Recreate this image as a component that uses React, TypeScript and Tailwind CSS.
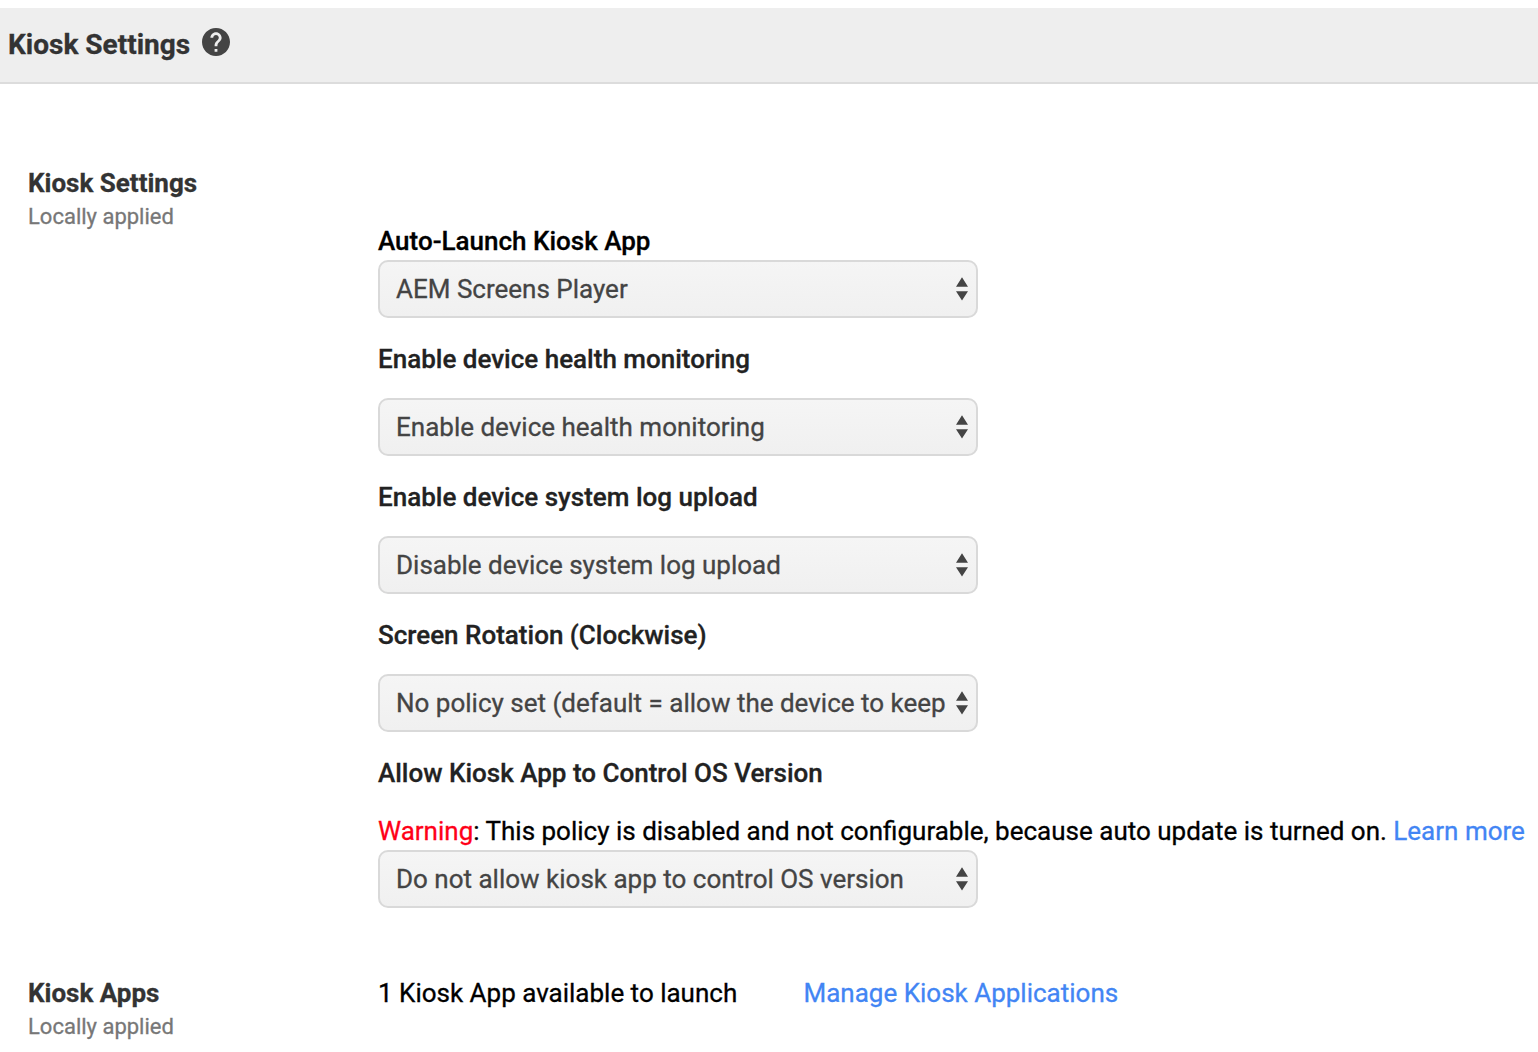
import React from "react";

function Arrows() {
  return (
    <svg width="12" height="24" viewBox="0 0 12 24" fill="#444" className="shrink-0">
      <path d="M6 0.3 12 9.7H0ZM0 14.2H12L6 23.6Z" />
    </svg>
  );
}

function Select({ text }: { text: string }) {
  return (
    <button className="flex h-[58px] w-[600px] items-center justify-between rounded-[10px] border-2 border-[#d9d9d9] bg-linear-to-b from-[#f5f5f5] to-[#f0f0f0] pr-2 pl-4 text-left text-[26px] text-[#444]">
      <span className="whitespace-nowrap">{text}</span>
      <Arrows />
    </button>
  );
}

function Side({ title }: { title: string }) {
  return (
    <div className="w-[350px] shrink-0">
      <h2 className="text-[26px] leading-[34px] font-bold text-[#333]">{title}</h2>
      <p className="text-[22px] leading-[34px] text-[#777]">Locally applied</p>
    </div>
  );
}

const fields = [
  { label: "Enable device health monitoring", value: "Enable device health monitoring" },
  { label: "Enable device system log upload", value: "Disable device system log upload" },
  { label: "Screen Rotation (Clockwise)", value: "No policy set (default = allow the device to keep" },
];

export default function App() {
  return (
    <main className="h-[1052px] overflow-hidden bg-white pt-2 font-['Roboto',sans-serif] text-[26px] text-black [-webkit-text-stroke:0.3px]">
      <header className="flex h-[76px] items-center border-b-2 border-[#dcdcdc] bg-[#eee] pl-2">
        <h1 className="text-[28px] leading-[40px] font-bold text-[#333]">Kiosk Settings</h1>
        <svg width="28" height="28" viewBox="2 2 20 20" fill="#444" className="mb-1.5 ml-3">
          <path d="M12 2C6.48 2 2 6.48 2 12s4.48 10 10 10 10-4.48 10-10S17.52 2 12 2zm1 17h-2v-2h2v2zm2.07-7.75-.9.92C13.45 12.9 13 13.5 13 15h-2v-.5c0-1.1.45-2.1 1.17-2.83l1.24-1.26c.37-.36.59-.86.59-1.41 0-1.1-.9-2-2-2s-2 .9-2 2H8c0-2.21 1.79-4 4-4s4 1.79 4 4c0 .88-.36 1.68-.93 2.25z" />
        </svg>
      </header>
      <section className="flex pt-[82px] pl-7">
        <Side title="Kiosk Settings" />
        <div className="pt-[58px]">
          <h3 className="h-[36px] leading-[34px] font-medium">Auto-Launch Kiosk App</h3>
          <Select text="AEM Screens Player" />
          {fields.map((f) => (
            <div key={f.label} className="pt-6">
              <h3 className="h-[56px] leading-[34px] font-medium text-[#222]">{f.label}</h3>
              <Select text={f.value} />
            </div>
          ))}
          <h3 className="mt-6 h-[58px] leading-[34px] font-medium text-[#222]">Allow Kiosk App to Control OS Version</h3>
          <p className="h-[36px] leading-[34px] whitespace-nowrap">
            <span className="text-[#ff0018]">Warning</span>: This policy is disabled and not configurable, because auto update is turned on. <a className="text-[#4285f4]">Learn more</a>
          </p>
          <Select text="Do not allow kiosk app to control OS version" />
        </div>
      </section>
      <section className="flex pt-[68px] pl-7 leading-[34px]">
        <Side title="Kiosk Apps" />
        <p className="w-[425.5px]">1 Kiosk App available to launch</p>
        <a className="text-[#4285f4]">Manage Kiosk Applications</a>
      </section>
    </main>
  );
}
